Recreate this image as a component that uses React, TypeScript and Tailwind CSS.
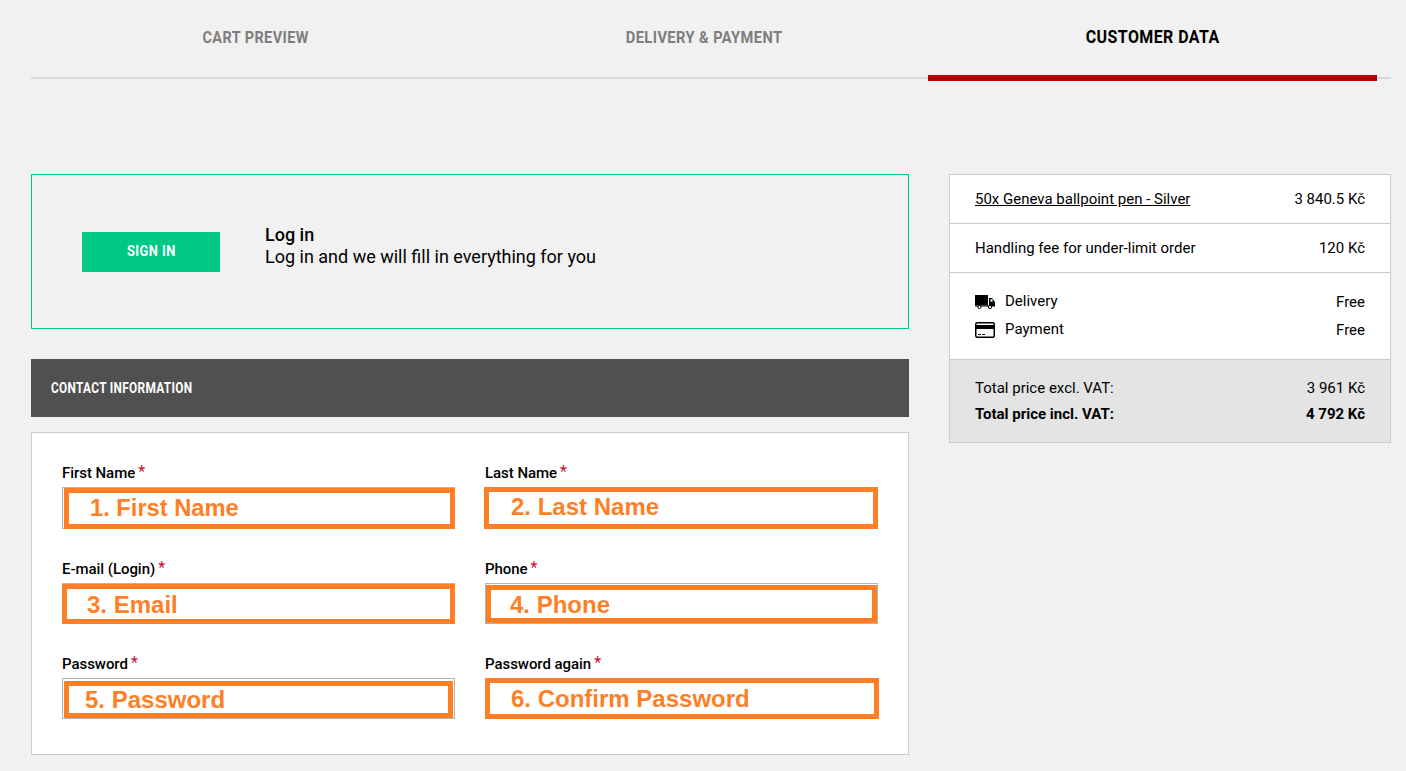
import React from 'react';

const annotationFont = "font-['Liberation_Sans',Arial,sans-serif]";

const Label = ({ text }: { text: string }) => (
  <div className="h-5 mb-1 flex items-center text-[15px] font-medium text-black tracking-[-0.05px]">
    <span>{text}</span>
    <span className="ml-[3px] text-[#c8102e] text-base font-normal leading-none -mt-[3px]">*</span>
  </div>
);

const Truck = () => (
  <svg width="20" height="14" viewBox="0 0 20 14" className="shrink-0">
    <rect x="0" y="0" width="13" height="10.5" fill="#000" />
    <path d="M14 3h3l3 4v4H14z" fill="#000" />
    <rect x="15.5" y="4.2" width="2" height="2.4" fill="#fff" />
    <rect x="0" y="10.5" width="20" height="1" fill="#000" />
    <circle cx="4.5" cy="12" r="1.6" fill="#fff" stroke="#000" />
    <circle cx="15" cy="12" r="1.6" fill="#fff" stroke="#000" />
  </svg>
);

const Card = () => (
  <svg width="20" height="16" viewBox="0 0 20 16" className="shrink-0">
    <rect x="0.75" y="0.75" width="18.5" height="14.5" rx="1.5" fill="#fff" stroke="#000" strokeWidth="1.5" />
    <rect x="1" y="3" width="18" height="4" fill="#000" />
    <rect x="3" y="12" width="3" height="1" fill="#000" />
    <rect x="7" y="12" width="3" height="1" fill="#000" />
  </svg>
);

const App: React.FC = () => {
  return (
    <div className="h-[771px] overflow-hidden bg-[#f1f1f1] pl-[31px] pr-[15px] font-['Roboto',sans-serif] text-[#111]">
      {/* steps */}
      <div className="flex h-[79px] border-b-2 border-[#d9d9d9] pr-[14px]">
        <div className="w-[449px] pt-[27px] text-center text-[17px] leading-5 font-bold tracking-[0.5px] text-[#7d7d7d]">
          <span className="inline-block scale-x-[0.85]">CART PREVIEW</span>
        </div>
        <div className="w-[448px] pt-[27px] text-center text-[17px] leading-5 font-bold tracking-[0.5px] text-[#7d7d7d]">
          <span className="inline-block scale-x-[0.86]">DELIVERY &amp; PAYMENT</span>
        </div>
        <div className="w-[449px] h-[81px] pt-[27px] text-center text-[19px] leading-5 font-bold tracking-[0.5px] text-black border-b-[6px] border-[#b30006] -mb-[2px]">
          <span className="inline-block scale-x-[0.84]">CUSTOMER DATA</span>
        </div>
      </div>

      <div className="mt-[95px] flex gap-[40px] items-start">
        <div className="w-[878px]">
          {/* login */}
          <div className="h-[155px] border border-[#00c985] flex items-center pl-[50px]">
            <button className="w-[138px] h-10 bg-[#00c985] text-white text-[15px] font-bold tracking-[0.5px]">
              <span className="inline-block scale-x-[0.86]">SIGN IN</span>
            </button>
            <div className="ml-[45px] -mt-[11px] text-black">
              <div className="font-medium text-lg leading-[22px]">Log in</div>
              <div className="font-normal text-[18px] leading-[22px]">Log in and we will fill in everything for you</div>
            </div>
          </div>

          <div className="mt-[30px] h-[58px] bg-[#505050] flex items-center pl-5 text-white text-[15px] font-bold tracking-[0.4px]">
            <span className="inline-block origin-left scale-x-[0.79]">CONTACT INFORMATION</span>
          </div>

          {/* form */}
          <div className="mt-[15px] h-[323px] bg-white border border-[#ccc] pl-[30px] pt-[30px] grid grid-cols-[393px_393px] gap-x-[30px] gap-y-[30px] content-start">
            <div>
              <Label text="First Name" />
              <div className="relative h-[42px] border border-[#b5b5b5]">
                <div className="absolute top-0 -right-px left-px -bottom-px border-[5px] border-[#ff7f27] flex items-center pl-[21px]">
                  <span className={`text-[#ff7f27] text-[23.7px] font-bold ${annotationFont}`}>1. First Name</span>
                </div>
              </div>
            </div>
            <div>
              <Label text="Last Name" />
              <div className="relative h-[42px] -ml-px border-[5px] border-[#ff7f27] flex items-center pl-[22px] pb-[3px]">
                <span className={`text-[#ff7f27] text-2xl font-bold ${annotationFont}`}>2. Last Name</span>
              </div>
            </div>
            <div>
              <Label text="E-mail (Login)" />
              <div className="relative h-[41px] border border-[#b5b5b5]">
                <div className="absolute top-0 -right-px -left-px -bottom-px border-[5px] border-[#ff7f27] flex items-center pl-5 pt-0.5">
                  <span className={`text-[#ff7f27] text-2xl font-bold ${annotationFont}`}>3. Email</span>
                </div>
              </div>
            </div>
            <div>
              <Label text="Phone" />
              <div className="relative h-[41px] border border-[#b5b5b5]">
                <div className="absolute top-px right-0 left-0 bottom-0 border-[5px] border-[#ff7f27] flex items-center pl-[19px] pt-0.5">
                  <span className={`text-[#ff7f27] text-2xl font-bold ${annotationFont}`}>4. Phone</span>
                </div>
              </div>
            </div>
            <div>
              <Label text="Password" />
              <div className="relative h-[41px] border border-[#b5b5b5]">
                <div className="absolute top-0.5 right-px left-px bottom-0 border-[5px] border-[#ff7f27] flex items-center pl-[16px]">
                  <span className={`text-[#ff7f27] text-2xl font-bold ${annotationFont}`}>5. Password</span>
                </div>
              </div>
            </div>
            <div>
              <Label text="Password again" />
              <div className="relative h-[41px] w-[394px] border-[5px] border-[#ff7f27] flex items-center pl-[21px] pt-px">
                <span className={`text-[#ff7f27] text-2xl font-bold ${annotationFont}`}>6. Confirm Password</span>
              </div>
            </div>
          </div>
        </div>

        {/* summary */}
        <div className="w-[442px] h-[269px] border border-[#ccc] bg-white text-[15px] font-normal text-black">
          <div className="h-[49px] px-[25px] flex items-center justify-between border-b border-[#ccc]">
            <span className="underline">50x Geneva ballpoint pen - Silver</span>
            <span>3 840.5 Kč</span>
          </div>
          <div className="h-[49px] px-[25px] flex items-center justify-between border-b border-[#ccc]">
            <span>Handling fee for under-limit order</span>
            <span>120 Kč</span>
          </div>
          <div className="h-[87px] px-[25px] pt-[15px] border-b border-[#ccc]">
            <div className="h-7 flex items-center justify-between">
              <span className="flex items-center gap-2.5"><Truck /><span className="-mt-0.5">Delivery</span></span>
              <span>Free</span>
            </div>
            <div className="h-7 flex items-center justify-between">
              <span className="flex items-center gap-2.5"><Card /><span className="-mt-0.5">Payment</span></span>
              <span>Free</span>
            </div>
          </div>
          <div className="h-[82px] px-[25px] pt-[15px] bg-[#e4e4e4]">
            <div className="h-[26px] flex items-center justify-between">
              <span>Total price excl. VAT:</span>
              <span>3 961 Kč</span>
            </div>
            <div className="h-[26px] flex items-center justify-between font-bold">
              <span>Total price incl. VAT:</span>
              <span>4 792 Kč</span>
            </div>
          </div>
        </div>
      </div>
    </div>
  );
};

export default App;
